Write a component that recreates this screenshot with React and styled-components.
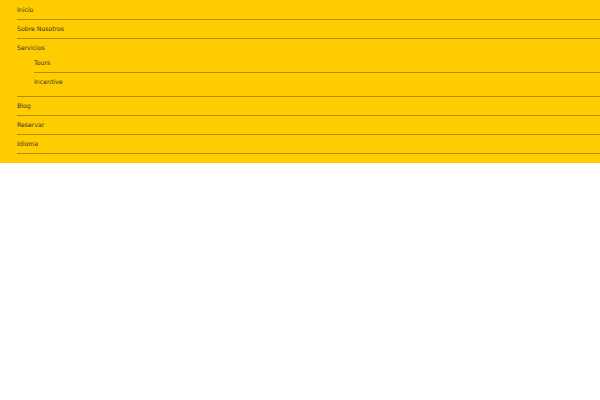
import React from "react";
import styled, { createGlobalStyle } from "styled-components";

const GlobalStyle = createGlobalStyle`
  body {
    margin: 0;
    background: #ffffff;
    font-family: "DejaVu Sans", "Liberation Sans", sans-serif;
  }
`;

const menu = [
  { label: "Inicio" },
  { label: "Sobre Nosotros" },
  { label: "Servicios", children: ["Tours", "Incentive"] },
  { label: "Blog" },
  { label: "Reservar" },
  { label: "Idioma" },
];

const Nav = styled.nav`
  background-color: #ffcc00;
  padding: 1px 0 9px 17px;
`;

const MenuList = styled.ul`
  list-style: none;
  margin: 0;
  padding: 0;
`;

const SubList = styled(MenuList)`
  padding-left: 17px;
  margin-bottom: 5px;
`;

const MenuItem = styled.li`
  border-bottom: 1px solid rgba(0, 0, 0, 0.3);
`;

const SubItem = styled.li`
  border-bottom: 1px solid rgba(0, 0, 0, 0.3);

  &:last-child {
    border-bottom: none;
  }
`;

const MenuLink = styled.a`
  display: block;
  font-size: 6.2px;
  line-height: 11px;
  padding: ${(props) => (props.$parent ? "3px 0 1px" : "3px 0 4px")};
  color: #333333;
  text-decoration: none;
`;

const App = () => {
  return (
    <>
      <GlobalStyle />
      <Nav>
        <MenuList>
          {menu.map((item) => (
            <MenuItem key={item.label}>
              <MenuLink href="#" $parent={!!item.children}>
                {item.label}
              </MenuLink>
              {item.children && (
                <SubList>
                  {item.children.map((child) => (
                    <SubItem key={child}>
                      <MenuLink href="#">{child}</MenuLink>
                    </SubItem>
                  ))}
                </SubList>
              )}
            </MenuItem>
          ))}
        </MenuList>
      </Nav>
    </>
  );
};

export default App;
